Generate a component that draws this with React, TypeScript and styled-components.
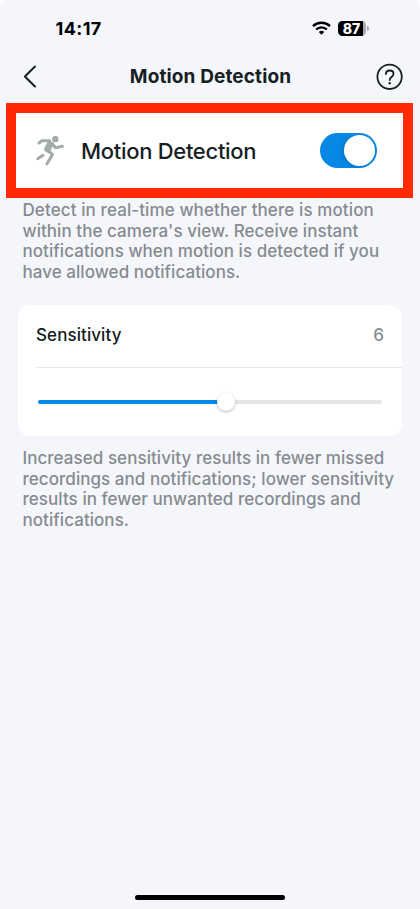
import React from "react";
import styled, { createGlobalStyle } from "styled-components";

const ink = "#152023";
const muted = "#858b8f";
const blue = "#0788e5";

const GlobalStyle = createGlobalStyle`
  * { box-sizing: border-box; }
  body { margin: 0; background: #fff; }
`;

const Screen = styled.main`
  display: flex;
  flex-direction: column;
  width: 420px;
  height: 909px;
  background: #f5f6fb;
  border-radius: 6px 6px 0 0;
  font-family: Inter, "Liberation Sans", sans-serif;
  color: ${ink};
  overflow: hidden;
`;

const StatusBar = styled.div`
  display: flex;
  align-items: center;
  justify-content: space-between;
  height: 56px;
  padding: 0 51px 0 55.5px;
  color: #000;
`;

const Time = styled.span`
  font-size: 18px;
  font-weight: 700;
  letter-spacing: 0.4px;
`;

const StatusIcons = styled.div`
  display: flex;
  align-items: center;
  gap: 7px;
`;

const Battery = styled.div`
  display: flex;
  align-items: center;
`;

const BatteryBody = styled.div`
  width: 28px;
  height: 15px;
  padding-right: 1px;
  border-radius: 4.5px;
  background: linear-gradient(90deg, #000 25px, #aaabae 25px);
  color: #fff;
  font-size: 14px;
  font-weight: 800;
  line-height: 15px;
  text-align: center;
`;

const BatteryTip = styled.div`
  width: 2px;
  height: 5px;
  margin-left: 1px;
  border-radius: 0 2px 2px 0;
  background: #aaabae;
`;

const NavBar = styled.header`
  display: grid;
  grid-template-columns: 28px 1fr 28px;
  align-items: center;
  height: 41px;
  padding: 0 16px 0 23px;
`;

const NavTitle = styled.h1`
  margin: 1px 6px 0 0;
  text-align: center;
  font-size: 19px;
  font-weight: 700;
  line-height: 24px;
  letter-spacing: 0.12px;
`;

const IconButton = styled.button`
  display: flex;
  padding: 0;
  border: 0;
  background: none;
  color: ${ink};
`;

const Highlight = styled.section`
  display: flex;
  align-items: center;
  width: 407px;
  height: 95px;
  margin: 6px 0 0 6px;
  padding: 0 26px 0 19px;
  border: 10px solid #ff2a04;
  background: #fff;
`;

const RowTitle = styled.span`
  flex: 1;
  margin-left: 16px;
  font-size: 22px;
  font-weight: 500;
  line-height: 30px;
  letter-spacing: -0.3px;
`;

const Toggle = styled.button`
  display: flex;
  justify-content: flex-end;
  width: 57px;
  height: 35px;
  padding: 2px;
  border: 0;
  border-radius: 18px;
  background: ${blue};
`;

const ToggleKnob = styled.span`
  width: 31px;
  height: 31px;
  border-radius: 50%;
  background: #fff;
  box-shadow: -2px 1px 4px rgba(0, 50, 100, 0.2);
`;

const Note = styled.p<{ $top: number }>`
  margin: ${(p) => p.$top}px 0 0 22.5px;
  color: ${muted};
  font-size: 17px;
  font-weight: 500;
  line-height: 20.5px;
`;

const NoteLine = styled.span<{ $tracking?: number }>`
  display: block;
  white-space: nowrap;
  letter-spacing: ${(p) => p.$tracking ?? 0.05}px;
`;

const Card = styled.section`
  width: 384px;
  height: 131px;
  margin: 23px 0 0 18px;
  padding-left: 18px;
  border-radius: 12px;
  background: #fff;
`;

const CardHeader = styled.div`
  display: flex;
  align-items: center;
  justify-content: space-between;
  height: 63px;
  padding: 0 18px 2px 0;
  border-bottom: 1px solid #e8e8e9;
  font-size: 17px;
  font-weight: 500;
  letter-spacing: 0.08px;
`;

const Value = styled.span`
  color: ${muted};
`;

const Slider = styled.div`
  display: flex;
  align-items: center;
  height: 68px;
  padding: 0 20px 0 2px;
`;

const Track = styled.div`
  position: relative;
  flex: 1;
  height: 4px;
  border-radius: 2px;
  background: #e6e6e6;
`;

const Fill = styled.div`
  width: 188px;
  height: 4px;
  border-radius: 2px;
  background: ${blue};
`;

const Thumb = styled.div`
  position: absolute;
  left: 179px;
  top: -7px;
  width: 18px;
  height: 18px;
  border-radius: 50%;
  background: #fff;
  box-shadow: 0 1px 3px rgba(30, 60, 80, 0.35);
`;

const HomeIndicator = styled.div`
  width: 150px;
  height: 5px;
  margin: auto auto 9px;
  border-radius: 3px;
  background: #000;
`;

const WifiIcon = () => (
  <svg width="19" height="14" viewBox="0 0 19 14" fill="none" stroke="#000" strokeWidth="2.4">
    <path d="M1 5.1a12.3 12.3 0 0 1 17 0" />
    <path d="M4.1 8.5a7.8 7.8 0 0 1 10.8 0" />
    <path d="M9.5 13.7 6.8 11a3.9 3.9 0 0 1 5.4 0Z" fill="#000" stroke="none" />
  </svg>
);

const BackIcon = () => (
  <svg width="14" height="24" viewBox="0 0 14 24" fill="none" stroke="currentColor" strokeWidth="2" strokeLinecap="round" strokeLinejoin="round">
    <path d="M12 1.5 1.9 11.5 12 21.5" />
  </svg>
);

const HelpIcon = () => (
  <svg width="28" height="28" viewBox="0 0 28 28" fill="none" stroke="currentColor" strokeWidth="1.8" strokeLinecap="round" strokeLinejoin="round">
    <circle cx="13.6" cy="13.8" r="12.2" />
    <path d="M9.9 11.1C9.9 8.7 11.4 7.5 13.6 7.5s3.9 1.3 3.9 3.3c0 3-3.8 3.3-3.8 6.2" />
    <circle cx="13.7" cy="20.2" r="1.2" fill="currentColor" stroke="none" />
  </svg>
);

const RunnerIcon = () => (
  <svg width="30" height="32" viewBox="105 110 90 96" fill="none" stroke="#a4a9aa" strokeWidth="9" strokeLinecap="round" strokeLinejoin="round">
    <circle cx="166" cy="122.5" r="9.5" fill="#a4a9aa" stroke="none" />
    <path d="M117 134 126 127.5 149 127.5M157 136 167 148.5 187 144M143 157 157.5 168 141 196.5M129 171 113 181" />
    <path d="M136 128h15l9 11-10 17 8 12-21-9q-6-4-2-11l9-16Z" fill="#a4a9aa" strokeWidth="3" />
  </svg>
);

export default function App() {
  return (
    <Screen>
      <GlobalStyle />
      <StatusBar>
        <Time>14:17</Time>
        <StatusIcons>
          <WifiIcon />
          <Battery>
            <BatteryBody>87</BatteryBody>
            <BatteryTip />
          </Battery>
        </StatusIcons>
      </StatusBar>
      <NavBar>
        <IconButton aria-label="Back"><BackIcon /></IconButton>
        <NavTitle>Motion Detection</NavTitle>
        <IconButton aria-label="Help"><HelpIcon /></IconButton>
      </NavBar>
      <Highlight>
        <RunnerIcon />
        <RowTitle>Motion Detection</RowTitle>
        <Toggle role="switch" aria-checked="true" aria-label="Motion Detection"><ToggleKnob /></Toggle>
      </Highlight>
      <Note $top={2}>
        <NoteLine $tracking={0.1}>Detect in real-time whether there is motion</NoteLine>
        <NoteLine>within the camera's view. Receive instant</NoteLine>
        <NoteLine>notifications when motion is detected if you</NoteLine>
        <NoteLine>have allowed notifications.</NoteLine>
      </Note>
      <Card>
        <CardHeader>
          <span>Sensitivity</span>
          <Value>6</Value>
        </CardHeader>
        <Slider>
          <Track>
            <Fill />
            <Thumb />
          </Track>
        </Slider>
      </Card>
      <Note $top={12}>
        <NoteLine>Increased sensitivity results in fewer missed</NoteLine>
        <NoteLine>recordings and notifications; lower sensitivity</NoteLine>
        <NoteLine>results in fewer unwanted recordings and</NoteLine>
        <NoteLine>notifications.</NoteLine>
      </Note>
      <HomeIndicator />
    </Screen>
  );
}
